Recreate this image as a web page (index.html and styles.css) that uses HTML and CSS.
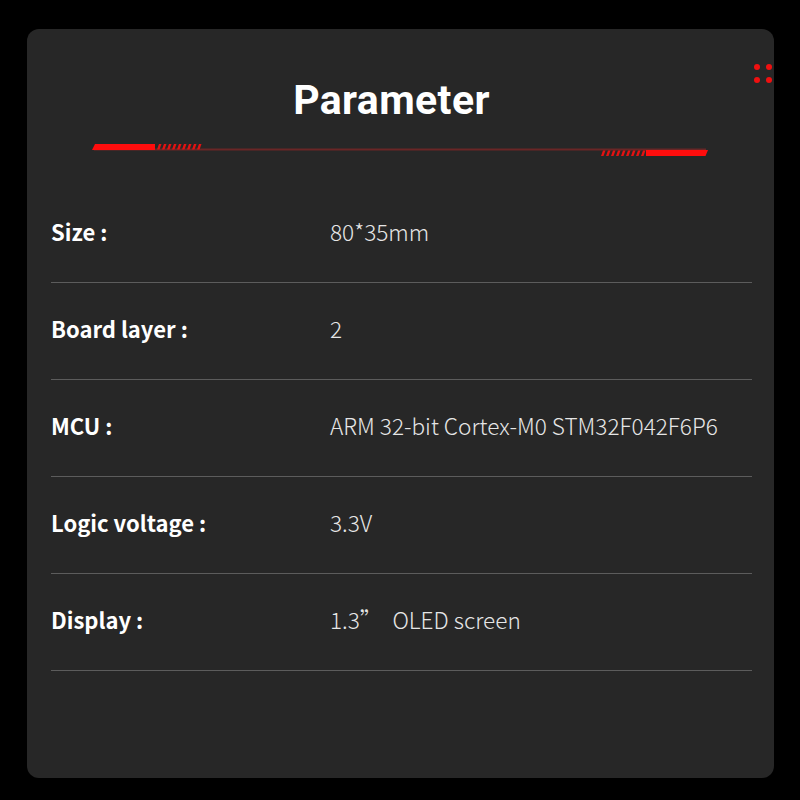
FILE: index.html
```html
<!DOCTYPE html>
<html>
<head>
<meta charset="utf-8">
<link rel="stylesheet" href="styles.css">
</head>
<body>
<div class="card">
  <div class="dots"><span></span><span></span><span></span><span></span></div>
  <h1 class="title">Parameter</h1>
  <svg class="deco" width="620" height="14" viewBox="0 0 620 14">
    <rect x="4" y="5.5" width="612" height="2" fill="#6a2626"/>
    <polygon points="5,1 65,1 65,7 2,7" fill="#ff0d0d"/>
    <g fill="#e31212">
      <polygon points="69,1 71.5,1 69.5,6.5 67,6.5"/>
      <polygon points="74,1 76.5,1 74.5,6.5 72,6.5"/>
      <polygon points="79,1 81.5,1 79.5,6.5 77,6.5"/>
      <polygon points="84,1 86.5,1 84.5,6.5 82,6.5"/>
      <polygon points="89,1 91.5,1 89.5,6.5 87,6.5"/>
      <polygon points="94,1 96.5,1 94.5,6.5 92,6.5"/>
      <polygon points="99,1 101.5,1 99.5,6.5 97,6.5"/>
      <polygon points="104,1 106.5,1 104.5,6.5 102,6.5"/>
      <polygon points="109,1 111.5,1 109.5,6.5 107,6.5"/>
      <polygon points="513,7.5 515.5,7.5 513.5,13 511,13"/>
      <polygon points="518,7.5 520.5,7.5 518.5,13 516,13"/>
      <polygon points="523,7.5 525.5,7.5 523.5,13 521,13"/>
      <polygon points="528,7.5 530.5,7.5 528.5,13 526,13"/>
      <polygon points="533,7.5 535.5,7.5 533.5,13 531,13"/>
      <polygon points="538,7.5 540.5,7.5 538.5,13 536,13"/>
      <polygon points="543,7.5 545.5,7.5 543.5,13 541,13"/>
      <polygon points="548,7.5 550.5,7.5 548.5,13 546,13"/>
      <polygon points="553,7.5 555.5,7.5 553.5,13 551,13"/>
    </g>
    <polygon points="556,7 618,7 615.5,13 556,13" fill="#ff0d0d"/>
  </svg>
  <div class="rows">
    <div class="row"><div class="label">Size :</div><div class="value">80*35mm</div></div>
    <div class="row"><div class="label">Board layer :</div><div class="value">2</div></div>
    <div class="row"><div class="label">MCU :</div><div class="value">ARM 32-bit Cortex-M0 STM32F042F6P6</div></div>
    <div class="row"><div class="label">Logic voltage :</div><div class="value">3.3V</div></div>
    <div class="row"><div class="label">Display :</div><div class="value">1.3”&nbsp;&nbsp;OLED screen</div></div>
  </div>
</div>
</body>
</html>
```

FILE: styles.css
```css
html, body {
  margin: 0;
  padding: 0;
  background: #000;
}
body {
  width: 800px;
  height: 800px;
  overflow: hidden;
}
.card {
  position: relative;
  box-sizing: border-box;
  margin: 29px 0 0 27px;
  width: 747px;
  height: 749px;
  background: #272727;
  border-radius: 12px;
  padding: 46px 22px 0 24px;
  display: flex;
  flex-direction: column;
  align-items: stretch;
}
.dots {
  position: absolute;
  right: 2px;
  top: 35px;
  display: grid;
  grid-template-columns: 6px 6px;
  grid-template-rows: 6px 6px;
  gap: 7px 6px;
}
.dots span {
  display: block;
  width: 6px;
  height: 6px;
  border-radius: 50%;
  background: #f01010;
}
.title {
  margin: 0;
  text-align: center;
  font-family: Roboto, "Liberation Sans", sans-serif;
  font-weight: 700;
  font-size: 41px;
  line-height: 50px;
  letter-spacing: 0.4px;
  color: #fff;
  padding-right: 20px;
}
.deco {
  display: block;
  margin: 18px 0 0 39px;
}
.rows {
  margin-top: 29px;
  display: flex;
  flex-direction: column;
}
.row {
  height: 97px;
  box-sizing: border-box;
  border-bottom: 1px solid #5c5c5c;
  display: flex;
  align-items: center;
  padding-bottom: 6px;
  font-family: "Noto Sans CJK SC", "Noto Sans", sans-serif;
  font-size: 22px;
}
.label {
  width: 279px;
  flex: none;
  font-weight: 700;
  color: #fff;
}
.value {
  font-weight: 300;
  font-size: 22.6px;
  color: #e6e6e6;
}
```
